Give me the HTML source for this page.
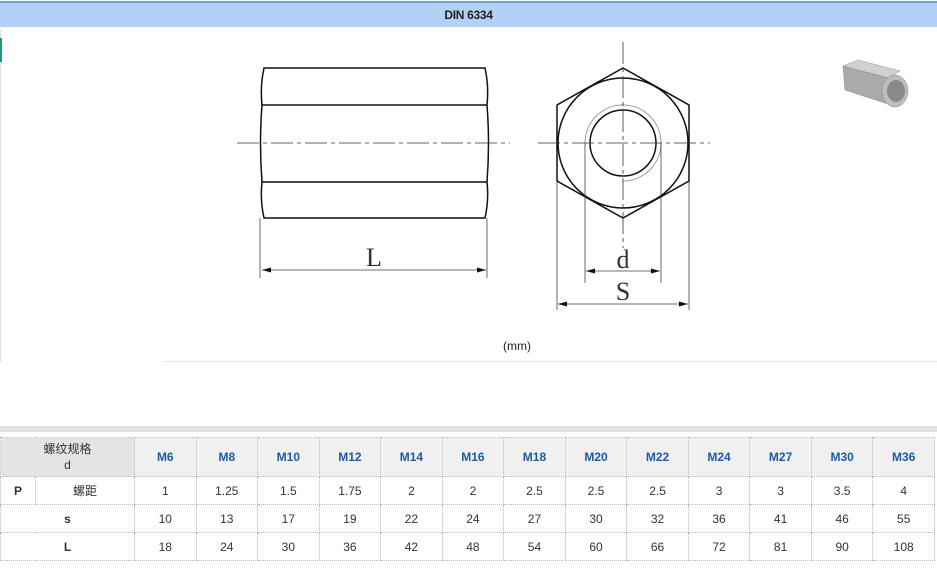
<!DOCTYPE html>
<html><head><meta charset="utf-8"><style>
body{margin:0;width:937px;height:568px;background:#fff;position:relative;overflow:hidden;font-family:"Liberation Sans","Noto Sans CJK SC",sans-serif}
.abs{position:absolute}
table{position:absolute;left:0;top:437px;width:935px;table-layout:fixed;border-collapse:collapse;font-size:12px;color:#333}
td{border:1px dotted #bbb;text-align:center;padding:0;height:27px}
.h td{height:38px;background:#f0f0f0;color:#1d5aa5;font-weight:bold}
.h td.f{background:#e4e4e4;color:#333;font-weight:normal;line-height:16px}
.b{font-weight:bold}
</style></head><body>
<div class="abs" style="left:0;top:1px;width:937px;height:2px;background:#6aa6e2"></div>
<div class="abs" style="left:0;top:3px;width:937px;height:24px;background:#b1d2f6;text-align:center;font-size:12px;line-height:24px;color:#222;font-weight:bold;letter-spacing:-0.3px">DIN 6334</div>
<div class="abs" style="left:0;top:30px;width:1px;height:332px;background:#ddd"></div>
<div class="abs" style="left:0;top:38px;width:2px;height:24px;background:#1a9a80"></div>
<div class="abs" style="left:163px;top:361px;width:774px;height:1px;background:#e6e6e6"></div>
<div class="abs" style="left:0;top:426px;width:937px;height:6px;background:#e1e1e1"></div>
<svg class="abs" style="left:0;top:0" width="937" height="420">
<g fill="none" stroke="#111" stroke-width="1.5">
<path d="M264 68 H485 Q489 86 487 105 Q490 143 487 182 Q489 200 485 218 H264 Q260 200 262 182 Q259 143 262 105 Q260 86 264 68Z"/>
<path d="M262 105 H487 M262 182 H487"/>
<polygon points="623,68 689,105 689,181 623,218 557,181 557,105"/>
<circle cx="623" cy="143" r="65"/>
<circle cx="623" cy="143" r="33"/>
</g>
<path d="M623 181 A38 38 0 1 0 585 143" fill="none" stroke="#999" stroke-width="1"/>
<g stroke="#333" stroke-width="0.8" stroke-dasharray="22,4,4,4">
<line x1="237" y1="143" x2="510" y2="143"/><line x1="538" y1="143" x2="710" y2="143"/>
<line x1="623" y1="42" x2="623" y2="248"/>
</g>
<g stroke="#444" stroke-width="0.8" fill="none">
<path d="M260 218 V278 M487 218 V278 M262 270 H486"/>
<path d="M585 143 V283 M661 143 V283 M586 271 H660"/>
<path d="M557 182 V310 M689 182 V310 M558 304 H688"/>
</g>
<g fill="#111"><path d="M262 270 l9 -2.5 v5z M486 270 l-9 -2.5 v5z M586 271 l9 -2.5 v5z M660 271 l-9 -2.5 v5z M558 304 l9 -2.5 v5z M688 304 l-9 -2.5 v5z"/></g>
<g font-family="Liberation Serif,serif" font-size="26" fill="#333" text-anchor="middle">
<text x="374" y="266">L</text><text x="623" y="268">d</text><text x="623" y="300">S</text></g>
<text x="517" y="350" font-size="12" fill="#222" text-anchor="middle">(mm)</text>
<g>
<polygon points="843,66 858,60 900,71 888,78" fill="#d0d0d0" stroke="#999" stroke-width="0.5"/>
<polygon points="843,66 888,78 888,104 845,90" fill="#aaa" stroke="#888" stroke-width="0.5"/>
<ellipse cx="895" cy="91" rx="13" ry="16" fill="#bdbdbd" stroke="#888" stroke-width="0.5"/>
<ellipse cx="896" cy="91" rx="9" ry="11" fill="#8a8a8a"/>
</g>
</svg>
<table>
<colgroup><col style="width:35px"><col style="width:99px"><col span="13"></colgroup>
<tr class="h"><td class="f" colspan="2">螺纹规格<br>d</td><td>M6</td><td>M8</td><td>M10</td><td>M12</td><td>M14</td><td>M16</td><td>M18</td><td>M20</td><td>M22</td><td>M24</td><td>M27</td><td>M30</td><td>M36</td></tr>
<tr><td class="b">P</td><td>螺距</td><td>1</td><td>1.25</td><td>1.5</td><td>1.75</td><td>2</td><td>2</td><td>2.5</td><td>2.5</td><td>2.5</td><td>3</td><td>3</td><td>3.5</td><td>4</td></tr>
<tr><td class="b" colspan="2">s</td><td>10</td><td>13</td><td>17</td><td>19</td><td>22</td><td>24</td><td>27</td><td>30</td><td>32</td><td>36</td><td>41</td><td>46</td><td>55</td></tr>
<tr><td class="b" colspan="2">L</td><td>18</td><td>24</td><td>30</td><td>36</td><td>42</td><td>48</td><td>54</td><td>60</td><td>66</td><td>72</td><td>81</td><td>90</td><td>108</td></tr>
</table>
</body></html>
